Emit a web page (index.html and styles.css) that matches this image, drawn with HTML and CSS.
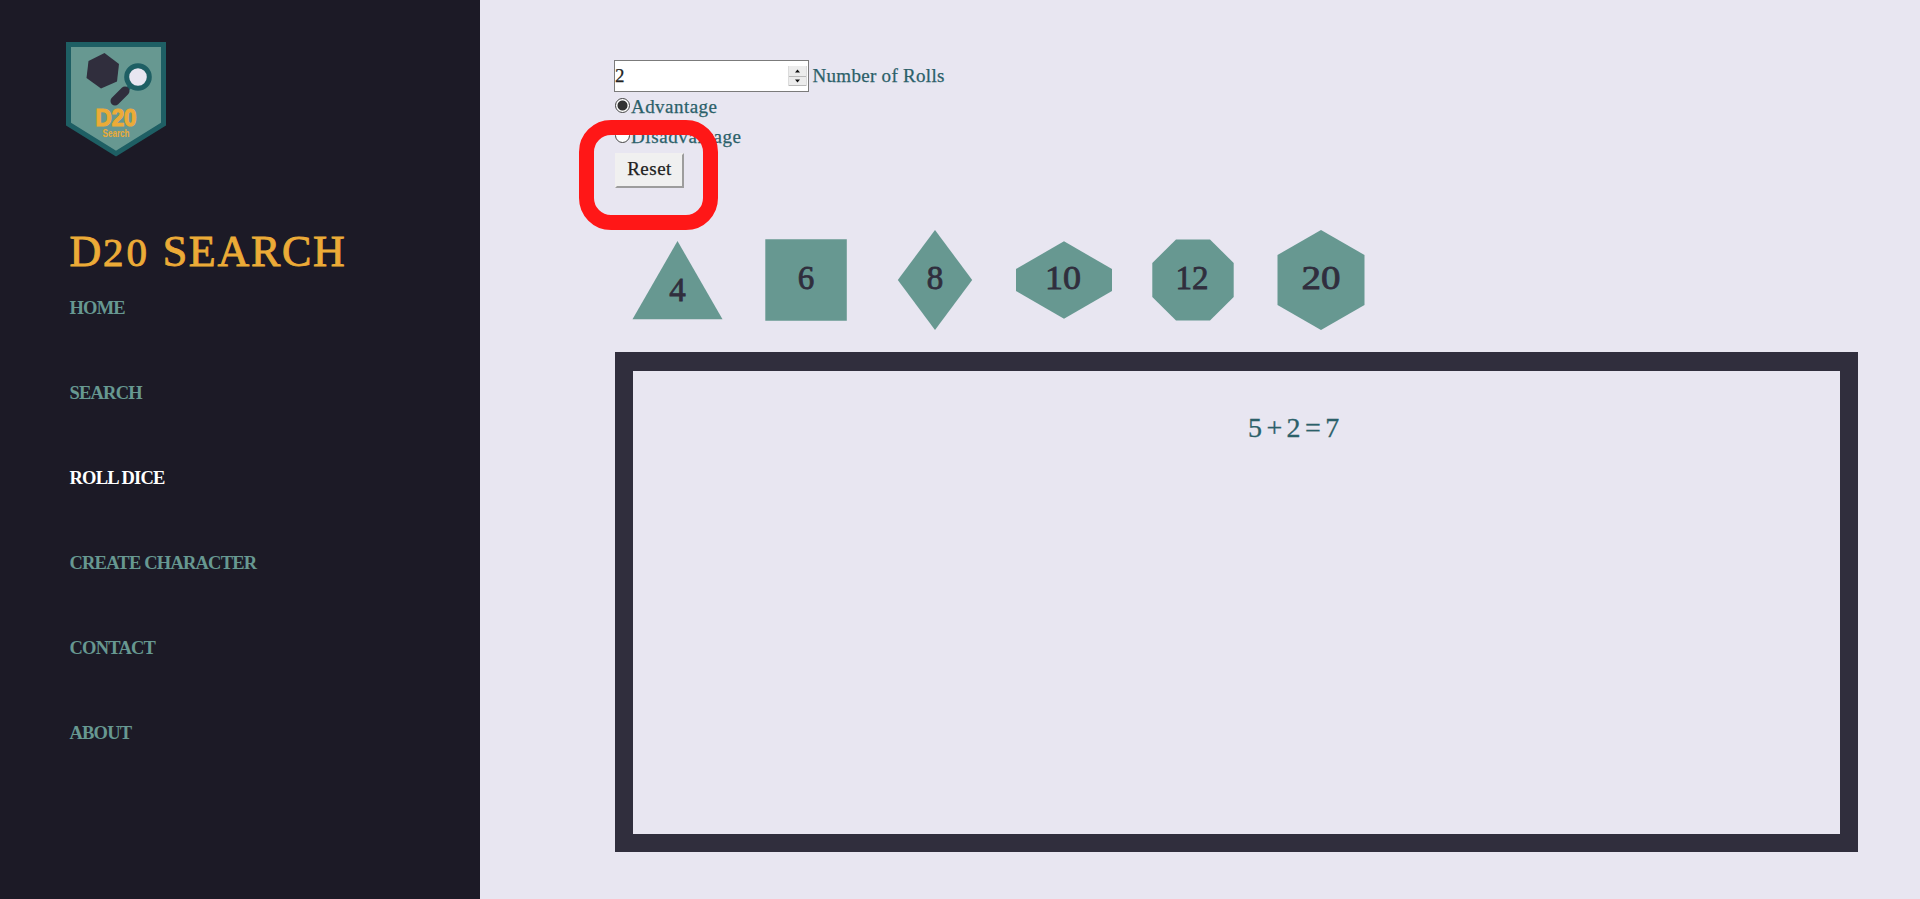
FILE: index.html
```html
<!DOCTYPE html>
<html lang="en">
<head>
<meta charset="utf-8">
<title>D20 Search - Roll Dice</title>
<link rel="stylesheet" href="styles.css">
</head>
<body>
<div class="page">
  <aside class="sidebar">
    <svg class="logo" viewBox="0 0 102 118" width="102" height="118">
      <path d="M3.500 3.500H98.500V83L51 112.500L3.500 83Z" fill="#679891" stroke="#1e5f64" stroke-width="5"/>
      <path d="M39.500 12L54 23L52 40.500L36 47.500L21.500 37L23.500 20Z" fill="#302e3d"/>
      <path d="M66 44L61 50" stroke="#1e5f64" stroke-width="4"/>
      <path d="M60 50L50 60" stroke="#302e3d" stroke-width="9" stroke-linecap="round"/>
      <circle cx="73" cy="36" r="11.300" fill="#e8e6f1" stroke="#1e5f64" stroke-width="5"/>
      <text class="logo-name" x="30.500" y="84.500" textLength="41" lengthAdjust="spacingAndGlyphs">D20</text>
      <text class="logo-sub" x="37.500" y="95.500" textLength="27" lengthAdjust="spacingAndGlyphs">Search</text>
    </svg>
    <h1 class="title">D<span class="numeral">20</span> SEARCH</h1>
    <nav class="nav">
      <a class="nav-link">HOME</a>
      <a class="nav-link">SEARCH</a>
      <a class="nav-link active">ROLL DICE</a>
      <a class="nav-link">CREATE CHARACTER</a>
      <a class="nav-link">CONTACT</a>
      <a class="nav-link">ABOUT</a>
    </nav>
  </aside>
  <main class="content">
    <div class="form">
      <div class="rolls">
        <div class="number-input">
          <span>2</span>
          <svg class="spinner" viewBox="0 0 19 20" width="19" height="20">
            <path d="M0 0H19V20H0Z" fill="#ececec"/>
            <path d="M0 10.500H19M0 19.500H19" stroke="#b9b9b9"/>
            <path d="M18.500 0V20M.5 0V20" stroke="#dcdcdc"/>
            <path d="M7 6.500L9.500 3.500L12 6.500ZM7 13.500L9.500 16.500L12 13.500Z" fill="#111"/>
          </svg>
        </div>
        <span class="rolls-label">Number of Rolls</span>
      </div>
      <div class="option"><span class="radio checked"></span><span>Advantage</span></div>
      <div class="option"><span class="radio"></span><span>Disadvantage</span></div>
      <div class="reset-wrap">
        <div class="reset">Reset</div>
        <div class="highlight"></div>
      </div>
    </div>
    <div class="dice">
      <svg class="die" viewBox="0 0 100 100"><path d="M49.500 11L94.500 89.300H4.500Z"/><text x="49.500" y="71">4</text></svg>
      <svg class="die" viewBox="0 0 100 100"><path d="M9.300 9.300H90.800V90.700H9.300Z"/><text x="50" y="59">6</text></svg>
      <svg class="die" viewBox="0 0 100 100"><path d="M50 0L87.200 50L50 100L12.800 50Z"/><text x="50" y="59">8</text></svg>
      <svg class="die" viewBox="0 0 100 100"><path d="M50 11.300L98 39V61L50 88.700L2 61V39Z"/><text x="49" y="59" textLength="36" lengthAdjust="spacingAndGlyphs">10</text></svg>
      <svg class="die" viewBox="0 0 100 100"><path d="M33 9.500H67L90.700 33V67L67 90.500H33L9.300 67V33Z"/><text x="49" y="59" textLength="33" lengthAdjust="spacingAndGlyphs">12</text></svg>
      <svg class="die" viewBox="0 0 100 100"><path d="M50 0L93.500 25V75L50 100L6.500 75V25Z"/><text x="50" y="59" textLength="39" lengthAdjust="spacingAndGlyphs">20</text></svg>
    </div>
    <div class="results">5 + 2 = 7</div>
  </main>
</div>
</body>
</html>
```
FILE: styles.css
```css
* { box-sizing: border-box; }
body {
  margin: 0;
  background: #e8e6f1;
  color: #2b6069;
  font-family: "Liberation Serif", serif;
  font-size: 19px;
}
.page { display: flex; height: 899px; overflow: hidden; }
.sidebar {
  width: 480px;
  flex: none;
  background: #1c1a26;
  padding: 41px 0 0 69.500px;
}
.logo { display: block; margin-left: -4.500px; }
.logo-name {
  font: bold 23.500px "Liberation Sans", sans-serif;
  fill: #ecab37;
  stroke: #ecab37;
  stroke-width: 1.200px;
}
.logo-sub { font: bold 10px "Liberation Sans", sans-serif; fill: #ecab37; }
.title {
  margin: 68px 0 0;
  height: 50px;
  line-height: 50px;
  font-size: 44px;
  font-weight: 400;
  letter-spacing: 1.700px;
  color: #ecab37;
  -webkit-text-stroke: .9px #ecab37;
  white-space: nowrap;
}
.numeral { font-size: 41px; letter-spacing: 3px; }
.nav { display: flex; flex-direction: column; gap: 61px; margin-top: 19px; }
.nav-link {
  height: 24px;
  line-height: 24px;
  font-weight: 700;
  font-size: 18.500px;
  letter-spacing: -.8px;
  color: #679891;
}
.nav-link.active { color: #fff; }
.content { flex: none; width: 1378px; padding: 60px 0 0 135px; }
.rolls { display: flex; align-items: center; gap: 3.500px; height: 32px; margin-left: -1px; }
.number-input {
  display: flex;
  align-items: center;
  justify-content: space-between;
  width: 195px;
  height: 32px;
  padding: 0 1px 0 0;
  border: 1px solid #7b7b7b;
  background: #fff;
  color: #222;
}
.rolls-label { letter-spacing: .3px; line-height: 30px; }
.form { -webkit-text-stroke-width: .25px; }
.option { display: flex; align-items: center; height: 30px; gap: 1px; letter-spacing: .45px; }
.option + .option { letter-spacing: .6px; }
.radio {
  width: 15px;
  height: 15px;
  margin-top: -3px;
  border: 1px solid #444;
  border-radius: 50%;
  background: #fff;
}
.radio.checked { background: radial-gradient(circle, #333 4.500px, #fff 5.500px); }
.reset-wrap { position: relative; width: 69px; margin-top: 1px; }
.reset {
  width: 69px;
  height: 35px;
  border: 2px solid;
  border-color: #f1f0f0 #9d9d9d #9d9d9d #f1f0f0;
  background: #f0f0f0;
  color: #222;
  line-height: 28px;
  text-align: center;
  letter-spacing: .5px;
}
.highlight {
  position: absolute;
  left: -36px;
  top: -33px;
  width: 139px;
  height: 110px;
  border: 15.500px solid #ff1717;
  border-radius: 32px;
}
.dice { display: flex; gap: 28.800px; margin: 42px 0 0 12.500px; }
.die { width: 100px; height: 100px; flex: none; overflow: visible; fill: #679891; }
.die text {
  font-size: 33px;
  text-anchor: middle;
  fill: #302e3d;
  stroke: #302e3d;
  stroke-width: .8px;
}
.results {
  width: 1243px;
  height: 500px;
  margin-top: 22px;
  border: 18px solid #302e3d;
  border-top-width: 19px;
  padding: 40px 0 0 615px;
  font-size: 28px;
  line-height: 34px;
  letter-spacing: -1.300px;
  white-space: nowrap;
  -webkit-text-stroke-width: .3px;
}
```
